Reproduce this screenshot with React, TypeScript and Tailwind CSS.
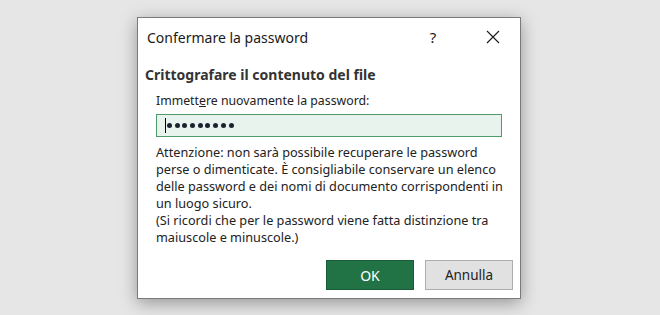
import React from 'react';

/**
 * Finestra di dialogo "Confermare la password"
 */

const font = { fontFamily: '"Segoe UI", "Noto Sans", "Open Sans", sans-serif' };

const dots = [0, 1, 2, 3, 4, 5, 6, 7, 8];

export default function App() {
  return (
    <div className="w-[660px] h-[315px] bg-[#e6e6e6] pl-[137px] pt-[17px]" style={font}>
      <div className="w-[384px] h-[282px] bg-white border border-[#7a7a7a] shadow-[0_4px_16px_rgba(0,0,0,0.35)] flex flex-col">
        {/* barra del titolo */}
        <div className="h-[38px] flex items-center pl-[9px] pr-[20px]">
          <span className="text-[14px] text-[#1a1a1a] flex-1">Confermare la password</span>
          <span className="text-[15px] text-[#1a1a1a] w-[20px] mr-[43px] text-center">?</span>
          <svg width="14" height="14" viewBox="0 0 14 14" className="text-[#1a1a1a]">
            <path d="M1 1 L13 13 M13 1 L1 13" stroke="currentColor" strokeWidth="1.1" fill="none" />
          </svg>
        </div>

        <div className="pl-[7px] pt-[8px]">
          <h2 className="text-[14px] font-bold text-[#333]">Crittografare il contenuto del file</h2>
        </div>

        <div className="pl-[18px] pr-[18px] pt-[7px]">
          <div className="text-[12.3px] text-[#222]">
            Immett<span className="underline">e</span>re nuovamente la password:
          </div>
          {/* campo password */}
          <div className="mt-[4px] h-[23px] border border-[#4f9a6c] bg-[#e9f3ed] flex items-center pl-[8px]">
            <span className="w-px h-[15px] bg-black mr-[1px]"></span>
            <div className="flex items-center gap-[2.7px]">
              {dots.map(i => (
                <span key={i} className="w-[5px] h-[5px] rounded-full bg-[#1c2330]"></span>
              ))}
            </div>
          </div>
          <p className="mt-[7px] mr-[-4px] text-[12.7px] leading-[17px] text-[#222]">
            Attenzione: non sarà possibile recuperare le password perse o dimenticate. È consigliabile conservare un elenco delle password e dei nomi di documento corrispondenti in un luogo sicuro.
            <br />
            (Si ricordi che per le password viene fatta distinzione tra maiuscole e minuscole.)
          </p>
        </div>

        <div className="mt-auto mb-[8px] pr-[7px] flex justify-end gap-[11px]">
          <button className="w-[88px] h-[30px] bg-[#217346] border border-[#1a5c38] text-white text-[14px]">OK</button>
          <button className="w-[88px] h-[30px] bg-[#e1e1e1] border border-[#adadad] text-[#222] text-[13.5px]">Annulla</button>
        </div>
      </div>
    </div>
  );
}
